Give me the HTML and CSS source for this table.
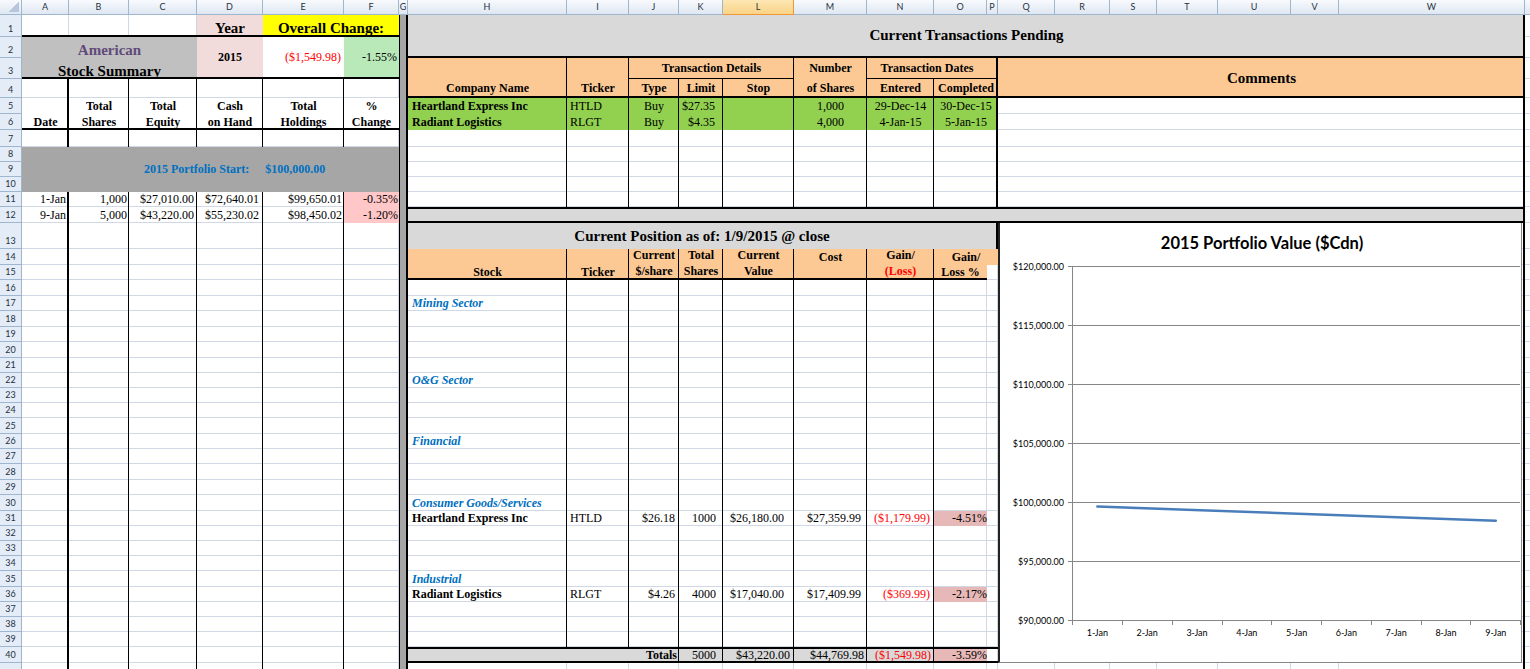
FILE: index.html
```html
<!DOCTYPE html>
<html>
<head>
<meta charset="utf-8">
<title>American Stock Summary</title>
<link rel="stylesheet" href="styles.css">
</head>
<body>
<div class="sheet">
  <div class="layer vl">
    <div class="colh corner"></div>
    <div class="colh">A</div><div class="colh">B</div><div class="colh">C</div><div class="colh">D</div>
    <div class="colh">E</div><div class="colh">F</div><div class="colh">G</div><div class="colh">H</div>
    <div class="colh">I</div><div class="colh">J</div><div class="colh">K</div><div class="colh sel">L</div>
    <div class="colh">M</div><div class="colh">N</div><div class="colh">O</div><div class="colh">P</div>
    <div class="colh">Q</div><div class="colh">R</div><div class="colh">S</div><div class="colh">T</div>
    <div class="colh">U</div><div class="colh">V</div><div class="colh">W</div><div class="colh">X</div>
    <i class="vline"></i><i class="vline"></i><i class="vline"></i><i class="vline"></i><i class="vline"></i>
    <i class="vline"></i><i class="vline"></i><i class="vline"></i><i class="vline"></i><i class="vline"></i>
    <i class="vline"></i><i class="vline"></i><i class="vline"></i><i class="vline"></i><i class="vline"></i>
    <i class="vline"></i><i class="vline"></i><i class="vline"></i><i class="vline"></i><i class="vline"></i>
    <i class="vline"></i><i class="vline"></i><i class="vline"></i><i class="vline"></i><i class="vline"></i>
  </div>

  <div class="layer hl">
    <i></i><i></i>
    <span class="rowh">1</span><i class="hline"></i>
    <span class="rowh">2</span><i class="hline"></i>
    <span class="rowh">3</span><i class="hline"></i>
    <span class="rowh">4</span><i class="hline"></i>
    <span class="rowh">5</span><i class="hline"></i>
    <span class="rowh">6</span><i class="hline"></i>
    <span class="rowh">7</span><i class="hline"></i>
    <span class="rowh">8</span><i class="hline"></i>
    <span class="rowh">9</span><i class="hline"></i>
    <span class="rowh">10</span><i class="hline"></i>
    <span class="rowh">11</span><i class="hline"></i>
    <span class="rowh">12</span><i class="hline"></i>
    <span class="rowh">13</span><i class="hline"></i>
    <span class="rowh">14</span><i class="hline"></i>
    <span class="rowh">15</span><i class="hline"></i>
    <span class="rowh">16</span><i class="hline"></i>
    <span class="rowh">17</span><i class="hline"></i>
    <span class="rowh">18</span><i class="hline"></i>
    <span class="rowh">19</span><i class="hline"></i>
    <span class="rowh">20</span><i class="hline"></i>
    <span class="rowh">21</span><i class="hline"></i>
    <span class="rowh">22</span><i class="hline"></i>
    <span class="rowh">23</span><i class="hline"></i>
    <span class="rowh">24</span><i class="hline"></i>
    <span class="rowh">25</span><i class="hline"></i>
    <span class="rowh">26</span><i class="hline"></i>
    <span class="rowh">27</span><i class="hline"></i>
    <span class="rowh">28</span><i class="hline"></i>
    <span class="rowh">29</span><i class="hline"></i>
    <span class="rowh">30</span><i class="hline"></i>
    <span class="rowh">31</span><i class="hline"></i>
    <span class="rowh">32</span><i class="hline"></i>
    <span class="rowh">33</span><i class="hline"></i>
    <span class="rowh">34</span><i class="hline"></i>
    <span class="rowh">35</span><i class="hline"></i>
    <span class="rowh">36</span><i class="hline"></i>
    <span class="rowh">37</span><i class="hline"></i>
    <span class="rowh">38</span><i class="hline"></i>
    <span class="rowh">39</span><i class="hline"></i>
    <span class="rowh">40</span><i class="hline"></i>
    <span class="rowh">41</span><i class="hline"></i>
  </div>

  <div class="layer ct">
    <!-- ===== Left panel: fills and headings ===== -->
    <div class="cell pink cD r1 ctr big">Year</div>
    <div class="cell yellow cE w2 r1 ctr big">Overall Change:</div>
    <div class="cell grey1 cA w3 r2 h2 summary"><span class="amer">American</span><span>Stock Summary</span></div>
    <div class="cell pink cD r2 h2 ctr mid b">2015</div>
    <div class="cell white cE r2 h2 rt mid red pr3">($1,549.98)</div>
    <div class="cell green cF r2 h2 rt mid pr2">-1.55%</div>
    <div class="cell white cA r5 h2 ctr b hd">Date</div>
    <div class="cell white cB r5 h2 ctr b hd"><span>Total<br>Shares</span></div>
    <div class="cell white cC r5 h2 ctr b hd"><span>Total<br>Equity</span></div>
    <div class="cell white cD r5 h2 ctr b hd"><span>Cash<br>on Hand</span></div>
    <div class="cell white cE r5 h2 ctr b hd"><span>Total<br>Holdings</span></div>
    <div class="cell white cF r5 h2 ctr b hd"><span>%<br>Change</span></div>
    <div class="cell pinkL cF r11 rt pr1">-0.35%</div>
    <div class="cell pinkL cF r12 rt pr1">-1.20%</div>

    <!-- left panel borders -->
    <i class="ln cA r4 h38 br2"></i>
    <i class="ln cB r4 h38 br1"></i>
    <i class="ln cC r4 h38 br1"></i>
    <i class="ln cD r4 h38 br1"></i>
    <i class="ln cE r4 h38 br1"></i>
    <i class="ln cA w6 r1 bb2"></i>
    <i class="ln cA w6 r3 bb2"></i>
    <i class="ln cA w6 r6 bb2"></i>

    <div class="cell grey2 cA w6 r8 h3 pstart"><span>2015 Portfolio Start:</span><span>$100,000.00</span></div>

    <!-- left panel data -->
    <div class="cell cA r11 rt pr3">1-Jan</div>
    <div class="cell cB r11 rt pr2">1,000</div>
    <div class="cell cC r11 rt pr3">$27,010.00</div>
    <div class="cell cD r11 rt pr4">$72,640.01</div>
    <div class="cell cE r11 rt pr2">$99,650.01</div>
    <div class="cell cA r12 rt pr3">9-Jan</div>
    <div class="cell cB r12 rt pr2">5,000</div>
    <div class="cell cC r12 rt pr3">$43,220.00</div>
    <div class="cell cD r12 rt pr4">$55,230.02</div>
    <div class="cell cE r12 rt pr2">$98,450.02</div>

    <div class="gcol cG r1 h41"></div>

    <!-- ===== Right panel: transactions pending ===== -->
    <div class="cell grey3 cH w16 r1 h2 ctr mid big bb2">Current Transactions Pending</div>
    <div class="fill orange cH w16 r3 h2 bb2"></div>
    <div class="fill greenB cH w9 r5 h2"></div>
    <i class="mrow cQ w7 r5"></i>
    <i class="mrow cQ w7 r6"></i>
    <i class="mrow cQ w7 r7"></i>
    <i class="mrow cQ w7 r8"></i>
    <i class="mrow cQ w7 r9"></i>
    <i class="mrow cQ w7 r10"></i>
    <i class="mrow cQ w7 r11"></i>
    <i class="mrow cO w2 r7"></i>
    <i class="mrow cO w2 r8"></i>
    <i class="mrow cO w2 r9"></i>
    <i class="mrow cO w2 r10"></i>
    <i class="mrow cO w2 r11"></i>

    <i class="ln cH r3 h9 br1"></i>
    <i class="ln cI r3 h9 br1"></i>
    <i class="ln cJ r4 h8 br1"></i>
    <i class="ln cK r4 h8 br1"></i>
    <i class="ln cL r3 h9 br1"></i>
    <i class="ln cM r3 h9 br1"></i>
    <i class="ln cN r4 h8 br1"></i>
    <i class="ln cP r3 h9 br2"></i>
    <i class="ln cJ w3 r3 bb1"></i>
    <i class="ln cN w3 r3 bb1"></i>

    <div class="cell cH r3 h2 ctr b pb3">Company Name</div>
    <div class="cell cI r3 h2 ctr b pb3">Ticker</div>
    <div class="cell cJ w3 r3 ctr mid b">Transaction Details</div>
    <div class="cell cJ r4 ctr b pb3">Type</div>
    <div class="cell cK r4 ctr b pb3">Limit</div>
    <div class="cell cL r4 ctr b pb3">Stop</div>
    <div class="cell cM r3 ctr mid b">Number</div>
    <div class="cell cM r4 ctr b pb3">of Shares</div>
    <div class="cell cN w2 r3 ctr mid b">Transaction Dates</div>
    <div class="cell cN r4 ctr b pb3">Entered</div>
    <div class="cell cO w2 r4 ctr b pb3">Completed</div>
    <div class="cell cQ w7 r3 h2 ctr mid big">Comments</div>

    <div class="cell cH r5 b pl4">Heartland Express Inc</div>
    <div class="cell cI r5 pl3">HTLD</div>
    <div class="cell cJ r5 ctr">Buy</div>
    <div class="cell cK r5 rt pr8">$27.35</div>
    <div class="cell cM r5 ctr">1,000</div>
    <div class="cell cN r5 ctr">29-Dec-14</div>
    <div class="cell cO w2 r5 ctr">30-Dec-15</div>
    <div class="cell cH r6 b pl4">Radiant Logistics</div>
    <div class="cell cI r6 pl3">RLGT</div>
    <div class="cell cJ r6 ctr">Buy</div>
    <div class="cell cK r6 rt pr8">$4.35</div>
    <div class="cell cM r6 ctr">4,000</div>
    <div class="cell cN r6 ctr">4-Jan-15</div>
    <div class="cell cO w2 r6 ctr">5-Jan-15</div>

    <div class="fill grey3 cH w16 r12 bt2 bb2"></div>

    <!-- ===== Right panel: current position ===== -->
    <div class="cell grey3 cH w9 r13 ctr mid big br2">Current Position as of: 1/9/2015 @ close</div>
    <div class="fill orange cH w8 r14 h2 bb2"></div>
    <div class="fill orange cP r14"></div>
    <div class="fill grey3 cH w8 r40"></div>

    <i class="ln cH r14 h26 br1"></i>
    <i class="ln cI r14 h26 br1"></i>
    <i class="ln cJ r14 h27 br1"></i>
    <i class="ln cK r14 h27 br1"></i>
    <i class="ln cL r14 h27 br1"></i>
    <i class="ln cM r14 h27 br1"></i>
    <i class="ln cN r14 h27 br1"></i>

    <div class="cell cH r14 h2 ctr b">Stock</div>
    <div class="cell cI r14 h2 ctr b">Ticker</div>
    <div class="cell cJ r14 h2 ctr b hd2"><span>Current<br>$/share</span></div>
    <div class="cell cK r14 h2 ctr b hd2"><span>Total<br>Shares</span></div>
    <div class="cell cL r14 h2 ctr b hd2"><span>Current<br>Value</span></div>
    <div class="cell cM r14 ctr b">Cost</div>
    <div class="cell cN r14 h2 ctr b hd2"><span>Gain/<br><em class="red">(Loss)</em></span></div>
    <div class="cell cO w2 r14 ctr b">Gain/</div>
    <div class="cell cO r15 ctr b">Loss %</div>

    <div class="cell cH r17 b it blue pl4">Mining Sector</div>
    <div class="cell cH r22 b it blue pl4">O&amp;G Sector</div>
    <div class="cell cH r26 b it blue pl4">Financial</div>
    <div class="cell cH r30 b it blue pl4">Consumer Goods/Services</div>

    <div class="cell cH r31 b pl4">Heartland Express Inc</div>
    <div class="cell cI r31 pl3">HTLD</div>
    <div class="cell cJ r31 rt pr4">$26.18</div>
    <div class="cell cK r31 rt pr7">1000</div>
    <div class="cell cL r31 rt pr10">$26,180.00</div>
    <div class="cell cM r31 rt pr6">$27,359.99</div>
    <div class="cell cN r31 rt pr4 red">($1,179.99)</div>
    <div class="cell pinkD cO r31 rt pr0">-4.51%</div>

    <div class="cell cH r35 b it blue pl4">Industrial</div>
    <div class="cell cH r36 b pl4">Radiant Logistics</div>
    <div class="cell cI r36 pl3">RLGT</div>
    <div class="cell cJ r36 rt pr4">$4.26</div>
    <div class="cell cK r36 rt pr7">4000</div>
    <div class="cell cL r36 rt pr10">$17,040.00</div>
    <div class="cell cM r36 rt pr6">$17,409.99</div>
    <div class="cell cN r36 rt pr4 red">($369.99)</div>
    <div class="cell pinkD cO r36 rt pr0">-2.17%</div>

    <div class="cell pinkD cO r40 rt pr0">-3.59%</div>
    <i class="ln cH w9 r40 bt2 bb2"></i>
    <div class="cell cH w3 r40 rt b pr2">Totals</div>
    <div class="cell cK r40 rt pr7">5000</div>
    <div class="cell cL r40 rt pr4">$43,220.00</div>
    <div class="cell cM r40 rt pr3">$44,769.98</div>
    <div class="cell cN r40 rt pr3 red">($1,549.98)</div>

    <!-- ===== Chart ===== -->
    <div class="chart cQ w7 r13 h28">
      <svg class="plot" width="521" height="439" viewBox="1000 223 521 439">
        <text class="ctitle" x="1262" y="249">2015 Portfolio Value ($Cdn)</text>
        <path class="axis" d="M1068 266.5H1520M1068 325.5H1520M1068 384.5H1520M1068 443.5H1520M1068 502.5H1520M1068 561.5H1520M1068 620.5H1520"/>
        <path class="axis" d="M1072.5 266V625M1122.5 620V625M1172.5 620V625M1222.5 620V625M1271.5 620V625M1321.5 620V625M1371.5 620V625M1421.5 620V625M1470.5 620V625M1520.5 620V625"/>
        <text class="ylab" x="1064" y="269.5">$120,000.00</text>
        <text class="ylab" x="1064" y="328.5">$115,000.00</text>
        <text class="ylab" x="1064" y="387.5">$110,000.00</text>
        <text class="ylab" x="1064" y="446.5">$105,000.00</text>
        <text class="ylab" x="1064" y="505.5">$100,000.00</text>
        <text class="ylab" x="1064" y="564.5">$95,000.00</text>
        <text class="ylab" x="1064" y="623.5">$90,000.00</text>
        <text class="xlab" x="1097.4" y="636">1-Jan</text>
        <text class="xlab" x="1147.2" y="636">2-Jan</text>
        <text class="xlab" x="1197" y="636">3-Jan</text>
        <text class="xlab" x="1246.8" y="636">4-Jan</text>
        <text class="xlab" x="1296.6" y="636">5-Jan</text>
        <text class="xlab" x="1346.4" y="636">6-Jan</text>
        <text class="xlab" x="1396.2" y="636">7-Jan</text>
        <text class="xlab" x="1446" y="636">8-Jan</text>
        <text class="xlab" x="1495.8" y="636">9-Jan</text>
        <path class="series" d="M1097.4 506.6L1495.8 520.8"/>
      </svg>
    </div>
    <i class="ln cW r1 h41 br2"></i>
  </div>
</div>
</body>
</html>
```

FILE: styles.css
```css
* { box-sizing: border-box; margin: 0; padding: 0; }
html, body { width: 1530px; height: 669px; overflow: hidden; background: #fff; }
body { font-family: "Liberation Serif", "Times New Roman", serif; color: #000; }

.sheet {
  --cols: 22px 47px 60px 68px 66px 81px 55px 9px 159px 62px 50px 44px 71px 73px 67px 53px 11px 57px 55px 47px 61px 73px 48px 186px 20px;
  --rows: 15px 22px 21px 21px 19px 16px 16px 17px 15px 15px 15px 15px 16px 26px 16px 15px 16px 15px 16px 15px 16px 15px 15px 15px 15px 16px 15px 15px 16px 15px 16px 15px 15px 15px 15px 16px 15px 15px 15px 15px 16px 20px;
  display: grid;
  grid-template-columns: 1545px;
  grid-template-rows: 683px;
  width: 1530px;
  height: 669px;
  overflow: hidden;
}
.layer { grid-area: 1 / 1; display: grid; }
.vl { grid-template-columns: var(--cols); grid-template-rows: 15px 1fr; }
.hl { grid-template-columns: 22px 1fr; grid-template-rows: var(--rows); }
.ct { grid-template-columns: var(--cols); grid-template-rows: var(--rows); }

/* headers */
.colh {
  background: linear-gradient(#f8fafd, #dfe7f2);
  border-right: 1px solid #9eb6ce;
  border-bottom: 1px solid #9eb6ce;
  font: 9px/14px Lato, "Open Sans", sans-serif;
  color: #27313d;
  text-align: center;
}
.colh.sel {
  background: linear-gradient(#fde7b3, #f8d387);
  border-right-color: #f29536;
  border-bottom-color: #f29536;
}
.corner { display: flex; align-items: flex-end; justify-content: flex-end; padding: 0 2px 2px 0; }
.corner::after {
  content: "";
  width: 10px; height: 10px;
  background: linear-gradient(to bottom right, transparent 50%, #b7c6da 50%);
}
.vline { border-right: 1px solid #d0d7e5; }
.rowh {
  display: flex; align-items: flex-end; justify-content: center;
  background: #e4ecf7;
  border-right: 1px solid #9eb6ce;
  border-bottom: 1px solid #9eb6ce;
  font: 9px/12px Lato, "Open Sans", sans-serif;
  color: #27313d;
  padding-bottom: 1px;
}
.hline { border-bottom: 1px solid #d0d7e5; }

/* placement */
.cA { grid-column-start: 2; } .cB { grid-column-start: 3; } .cC { grid-column-start: 4; }
.cD { grid-column-start: 5; } .cE { grid-column-start: 6; } .cF { grid-column-start: 7; }
.cG { grid-column-start: 8; } .cH { grid-column-start: 9; } .cI { grid-column-start: 10; }
.cJ { grid-column-start: 11; } .cK { grid-column-start: 12; } .cL { grid-column-start: 13; }
.cM { grid-column-start: 14; } .cN { grid-column-start: 15; } .cO { grid-column-start: 16; }
.cP { grid-column-start: 17; } .cQ { grid-column-start: 18; } .cW { grid-column-start: 24; }
.w2 { grid-column-end: span 2; } .w3 { grid-column-end: span 3; } .w6 { grid-column-end: span 6; }
.w7 { grid-column-end: span 7; } .w8 { grid-column-end: span 8; } .w9 { grid-column-end: span 9; }
.w16 { grid-column-end: span 16; }

.r1 { grid-row-start: 2; } .r2 { grid-row-start: 3; } .r3 { grid-row-start: 4; } .r4 { grid-row-start: 5; }
.r5 { grid-row-start: 6; } .r6 { grid-row-start: 7; } .r7 { grid-row-start: 8; } .r8 { grid-row-start: 9; }
.r9 { grid-row-start: 10; } .r10 { grid-row-start: 11; } .r11 { grid-row-start: 12; } .r12 { grid-row-start: 13; }
.r13 { grid-row-start: 14; } .r14 { grid-row-start: 15; } .r15 { grid-row-start: 16; } .r17 { grid-row-start: 18; }
.r22 { grid-row-start: 23; } .r26 { grid-row-start: 27; } .r30 { grid-row-start: 31; } .r31 { grid-row-start: 32; }
.r35 { grid-row-start: 36; } .r36 { grid-row-start: 37; } .r40 { grid-row-start: 41; }
.h2 { grid-row-end: span 2; } .h3 { grid-row-end: span 3; } .h8 { grid-row-end: span 8; }
.h9 { grid-row-end: span 9; } .h26 { grid-row-end: span 26; } .h27 { grid-row-end: span 27; }
.h28 { grid-row-end: span 28; } .h38 { grid-row-end: span 38; } .h41 { grid-row-end: span 41; }

/* cells */
.cell {
  display: flex;
  align-items: flex-end;
  padding: 0 2px 1px;
  font-size: 12px;
  line-height: 13px;
  white-space: nowrap;
  min-width: 0;
}
.b { font-weight: bold; }
.it { font-style: italic; }
.ctr { justify-content: center; text-align: center; }
.rt { justify-content: flex-end; }
.mid { align-items: center; }
.big { font-size: 15px; line-height: 16px; font-weight: bold; }
.hd { line-height: 16px; padding-bottom: 0; }
.hd2 { line-height: 16px; }
.red { color: #ff0000; }
em.red { font-style: normal; }
.blue { color: #0070c0; }

.pr0 { padding-right: 0; } .pr1 { padding-right: 1px; } .pr2 { padding-right: 2px; }
.pr3 { padding-right: 3px; } .pr4 { padding-right: 4px; } .pr6 { padding-right: 6px; }
.pr7 { padding-right: 7px; } .pr8 { padding-right: 8px; } .pr10 { padding-right: 10px; }
.pl3 { padding-left: 3px; } .pl4 { padding-left: 4px; }
.pb3 { padding-bottom: 3px; }

/* fills */
.white { background: #fff; }
.yellow { background: #ffff00; }
.pink { background: #f2dcdb; }
.grey1 { background: #c0c0c0; }
.grey2 { background: #a6a6a6; }
.grey3 { background: #d9d9d9; }
.green { background: #b9e9b9; }
.greenB { background: #92d050; }
.orange { background: #fcc995; }
.pinkL { background: #ffc7c7; }
.pinkD { background: #e6b8b7; }
.mrow { background: #fff; border-bottom: 1px solid #d0d7e5; }

/* borders */
.bb1 { border-bottom: 1px solid #000; }
.bb2 { border-bottom: 2px solid #000; }
.bt2 { border-top: 2px solid #000; }
.br1 { border-right: 1px solid #000; }
.br2 { border-right: 2px solid #000; }

.gcol { background: #a6a6a6; border-left: 1px solid #000; border-right: 2px solid #000; }

.summary {
  display: grid;
  grid-template-rows: 21px 21px;
  align-items: end;
  justify-items: center;
  padding: 0 0 1px;
  font-size: 15px;
  line-height: 16px;
  font-weight: bold;
}
.amer { color: #604a7b; }

.pstart {
  align-items: center;
  padding-left: 122px;
  gap: 16px;
  color: #0070c0;
  font-weight: bold;
}

/* chart */
.chart {
  margin-right: 3px;
  background: #fff;
  border-left: 2px solid #222;
  border-right: 1px solid #868686;
  border-bottom: 1px solid #868686;
  overflow: hidden;
}
.plot { display: block; }
.plot text { font-family: Lato, "Open Sans", sans-serif; fill: #000; }
.ctitle { font-size: 16.5px; font-weight: bold; text-anchor: middle; }
.ylab { font-size: 9px; text-anchor: end; }
.xlab { font-size: 9px; text-anchor: middle; }
.axis { stroke: #868686; stroke-width: 1; fill: none; shape-rendering: crispEdges; }
.series { stroke: #4a7ebb; stroke-width: 2.5; fill: none; stroke-linecap: round; }
```
